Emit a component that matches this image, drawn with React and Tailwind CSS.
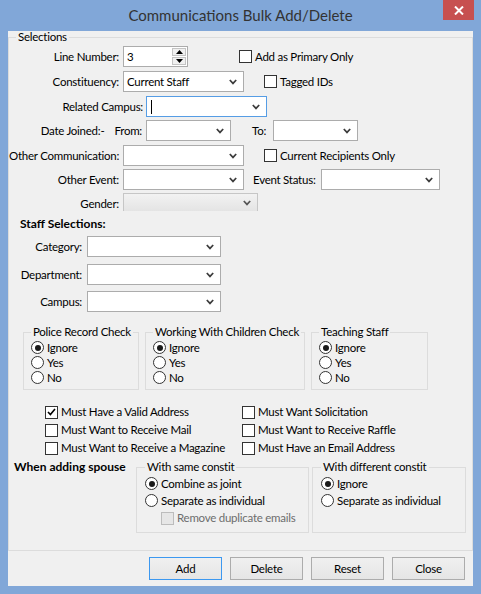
import React from 'react';

const Chevron = ({ color = '#3c3c3c' }) => (
  <svg width="8" height="6" viewBox="0 0 8 6" className="shrink-0">
    <path d="M0.8 1 L4 4.4 L7.2 1" fill="none" stroke={color} strokeWidth="1.7" />
  </svg>
);

const Select = ({ w, value, focused, cursor }) => (
  <div className={`${w} h-[21px] shrink-0 flex items-center justify-between pl-[3px] pr-[6px] border bg-white ${focused ? 'border-[#569de5]' : 'border-[#acacac]'}`}>
    <span className="flex items-center">
      {cursor && <span className="w-px h-[14px] bg-black ml-[1px]" />}
      {value}
    </span>
    <Chevron />
  </div>
);

const Check = ({ checked, disabled, children }) => (
  <div className="flex items-center gap-[3px]">
    <div className={`w-[13px] h-[13px] shrink-0 border flex items-center justify-center ${disabled ? 'border-[#bcbcbc] bg-[#e6e6e6]' : 'border-[#333333] bg-white'}`}>
      {checked && (
        <svg width="9" height="8" viewBox="0 0 9 8">
          <path d="M1 4 L3.4 6.6 L8 1" fill="none" stroke="#000" strokeWidth="1.6" />
        </svg>
      )}
    </div>
    <span className={disabled ? 'text-[#6d6d6d]' : ''}>{children}</span>
  </div>
);

const Radio = ({ checked, children }) => (
  <div className="flex items-center gap-[3px]">
    <div className="w-[13px] h-[13px] shrink-0 rounded-full border border-[#333333] bg-white flex items-center justify-center">
      {checked && <div className="w-[6px] h-[6px] rounded-full bg-[#1a1a1a]" />}
    </div>
    <span>{children}</span>
  </div>
);

const Group = ({ title, className, children }) => (
  <fieldset className={`border border-[#dcdcdc] shrink-0 ${className}`}>
    <legend className="px-[2px] leading-[14px]">{title}</legend>
    {children}
  </fieldset>
);

const Button = ({ children, primary }) => (
  <div className={`w-[73px] h-[23px] flex items-center justify-center border bg-gradient-to-b from-[#f0f0f0] to-[#e5e5e5] ${primary ? 'border-[#3c98f0]' : 'border-[#acacac]'}`}>
    {children}
  </div>
);

const App = () => {
  return (
    <div
      className="w-[481px] h-[594px] bg-[#81a7d8] flex flex-col text-[11.5px] tracking-[-0.25px] text-black whitespace-nowrap"
      style={{ fontFamily: 'Lato, "Liberation Sans", sans-serif' }}
    >
      {/* title bar */}
      <div className="h-[31px] relative flex items-center justify-center shrink-0">
        <span className="text-[15px] tracking-normal text-[#333333] -mt-[1px]">Communications Bulk Add/Delete</span>
        <div className="absolute right-[7px] top-0 w-[31px] h-[20px] bg-[#c75050] flex items-center justify-center">
          <svg width="10" height="9" viewBox="0 0 10 9">
            <path d="M1 0.5 L9 8.5 M9 0.5 L1 8.5" stroke="#fff" strokeWidth="2" />
          </svg>
        </div>
      </div>

      <div className="mx-[8px] h-[555px] bg-[#f0f0f0] flex flex-col">
        <fieldset className="h-[520px] border border-[#dcdcdc] flex flex-col">
          <legend className="ml-[7px] px-[2px] leading-[12px]">Selections</legend>

          {/* Line Number */}
          <div className="flex items-center h-[21px] mt-[3px]">
            <div className="w-[110px] text-right">Line Number:</div>
            <div className="ml-[4px] w-[65px] h-[21px] flex border border-[#acacac] bg-white">
              <div className="flex-1 pl-[3px] leading-[19px]">3</div>
              <div className="w-[16px] flex flex-col p-[1px] gap-[1px]">
                <div className="flex-1 border border-[#c4c4c4] bg-[#f0f0f0] flex items-center justify-center">
                  <svg width="7" height="4" viewBox="0 0 7 4"><path d="M0 4 L3.5 0 L7 4 Z" fill="#000" /></svg>
                </div>
                <div className="flex-1 border border-[#c4c4c4] bg-[#f0f0f0] flex items-center justify-center">
                  <svg width="7" height="4" viewBox="0 0 7 4"><path d="M0 0 L3.5 4 L7 0 Z" fill="#000" /></svg>
                </div>
              </div>
            </div>
            <div className="ml-[51px]"><Check>Add as Primary Only</Check></div>
          </div>

          {/* Constituency */}
          <div className="flex items-center h-[21px] mt-[4px]">
            <div className="w-[110px] text-right">Constituency:</div>
            <div className="ml-[4px]"><Select w="w-[121px]" value="Current Staff" /></div>
            <div className="ml-[20px]"><Check>Tagged IDs</Check></div>
          </div>

          {/* Related Campus */}
          <div className="flex items-center h-[21px] mt-[4px]">
            <div className="w-[134px] text-right">Related Campus:</div>
            <div className="ml-[3px]"><Select w="w-[121px]" focused cursor /></div>
          </div>

          {/* Date Joined */}
          <div className="flex items-center h-[21px] mt-[3px]">
            <div className="w-[133px] flex justify-end">
              <span>Date Joined:-</span>
              <span className="ml-[10px]">From:</span>
            </div>
            <div className="ml-[4px]"><Select w="w-[85px]" /></div>
            <div className="ml-[21px] w-[21px]">To:</div>
            <Select w="w-[85px]" />
          </div>

          {/* Other Communication */}
          <div className="flex items-center h-[21px] mt-[4px]">
            <div className="w-[110px] text-right">Other Communication:</div>
            <div className="ml-[4px]"><Select w="w-[121px]" /></div>
            <div className="ml-[20px]"><Check>Current Recipients Only</Check></div>
          </div>

          {/* Other Event */}
          <div className="flex items-center h-[21px] mt-[3px]">
            <div className="w-[110px] text-right">Other Event:</div>
            <div className="ml-[4px]"><Select w="w-[121px]" /></div>
            <div className="ml-[9px] w-[68px]">Event Status:</div>
            <Select w="w-[119px]" />
          </div>

          {/* Gender */}
          <div className="flex items-start h-[18px] mt-[3px]">
            <div className="w-[110px] text-right leading-[21px]">Gender:</div>
            <div className="ml-[4px] w-[135px] h-[18px] flex items-center justify-end pr-[6px] border border-b-0 border-[#c6c6c6] bg-gradient-to-b from-[#f2f2f2] to-[#e4e4e4]">
              <Chevron color="#555" />
            </div>
          </div>

          <div className="ml-[11px] mt-[6px] leading-[14px] font-bold text-[12px] tracking-normal">Staff Selections:</div>

          {[['Category:', 'mt-[5px]'], ['Department:', 'mt-[7px]'], ['Campus:', 'mt-[6px]']].map(([label, mt]) => (
            <div key={label} className={`flex items-center h-[21px] ${mt}`}>
              <div className="w-[73px] text-right">{label}</div>
              <div className="ml-[5px]"><Select w="w-[134px]" /></div>
            </div>
          ))}

          {/* radio groups */}
          <div className="flex mt-[13px] ml-[14px] gap-[6px]">
            {[
              ['Police Record Check', 'w-[116px]'],
              ['Working With Children Check', 'w-[160px]'],
              ['Teaching Staff', 'w-[117px]'],
            ].map(([title, w]) => (
              <Group key={title} title={title} className={`${w} h-[65px] pl-[7px]`}>
                <div className="mt-[1px] flex flex-col">
                  <div className="h-[15px] flex items-center"><Radio checked>Ignore</Radio></div>
                  <div className="h-[15px] flex items-center"><Radio>Yes</Radio></div>
                  <div className="h-[15px] flex items-center"><Radio>No</Radio></div>
                </div>
              </Group>
            ))}
          </div>

          {/* must-have checkboxes */}
          <div className="mt-[13px] ml-[36px] grid grid-cols-[197px_1fr]">
            <div className="h-[18px] flex items-center"><Check checked>Must Have a Valid Address</Check></div>
            <div className="h-[18px] flex items-center"><Check>Must Want Solicitation</Check></div>
            <div className="h-[18px] flex items-center"><Check>Must Want to Receive Mail</Check></div>
            <div className="h-[18px] flex items-center"><Check>Must Want to Receive Raffle</Check></div>
            <div className="h-[18px] flex items-center"><Check>Must Want to Receive a Magazine</Check></div>
            <div className="h-[18px] flex items-center"><Check>Must Have an Email Address</Check></div>
          </div>

          {/* spouse */}
          <div className="flex items-start mt-[3px]">
            <div className="ml-[5px] w-[122px] leading-[14px] font-bold text-[12px] tracking-normal">When adding spouse</div>
            <Group title="With same constit" className="w-[173px] h-[73px] pl-[8px]">
              <div className="mt-[1px] flex flex-col">
                <div className="h-[17px] flex items-center"><Radio checked>Combine as joint</Radio></div>
                <div className="h-[17px] flex items-center"><Radio>Separate as individual</Radio></div>
                <div className="h-[18px] flex items-center pl-[16px]"><Check disabled>Remove duplicate emails</Check></div>
              </div>
            </Group>
            <Group title="With different constit" className="ml-[3px] w-[154px] h-[73px] pl-[8px]">
              <div className="mt-[1px] flex flex-col">
                <div className="h-[17px] flex items-center"><Radio checked>Ignore</Radio></div>
                <div className="h-[17px] flex items-center"><Radio>Separate as individual</Radio></div>
              </div>
            </Group>
          </div>
        </fieldset>

        <div className="mt-[6px] flex justify-end gap-[8px] pr-[8px]">
          <Button primary>Add</Button>
          <Button>Delete</Button>
          <Button>Reset</Button>
          <Button>Close</Button>
        </div>
      </div>
    </div>
  );
};

export default App;
